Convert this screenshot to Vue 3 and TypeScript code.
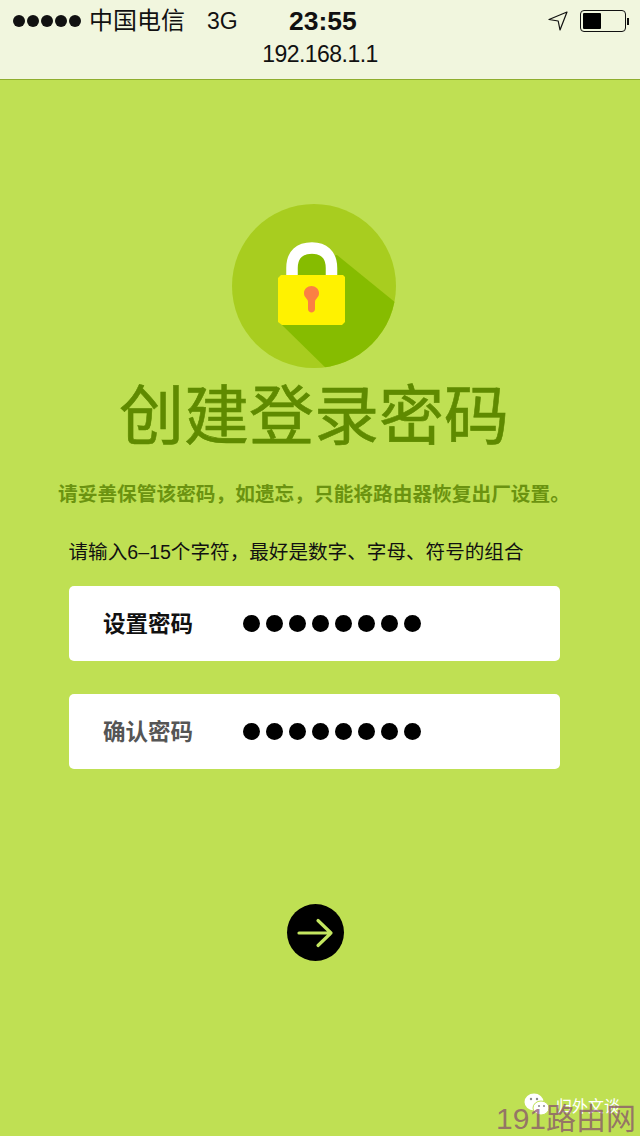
<template>
  <div class="page">
    <header class="topbar">
      <div class="status">
        <div class="status-left">
          <span class="signal"><i v-for="n in 5" :key="n" /></span>
          <span class="carrier">中国电信</span>
          <span class="net">3G</span>
        </div>
        <span class="time">23:55</span>
        <div class="status-right">
          <svg class="nav-arrow" width="20" height="22" viewBox="0 0 20 22">
            <path d="M1 9.5 19 2 12 20 10.2 11Z" fill="none" stroke="#111" stroke-width="1.2" stroke-linejoin="round" />
          </svg>
          <span class="battery"><span class="battery-fill" /></span>
          <span class="battery-tip" />
        </div>
      </div>
      <div class="url">192.168.1.1</div>
    </header>

    <main class="content">
      <svg class="lock" width="164" height="164" viewBox="0 0 164 164">
        <defs>
          <clipPath id="disc"><circle cx="82" cy="82" r="82" /></clipPath>
        </defs>
        <circle cx="82" cy="82" r="82" fill="#a8cd1f" />
        <path d="M105 51 L170 104 L170 170 L100 170 L50 121 L60 60Z" fill="#86bc00" clip-path="url(#disc)" />
        <path d="M65 72V62C65 54 71 50 80 50C88 50 94 54 94 62V72Z" fill="#86bc00" />
        <path d="M60 72V64C60 50 68 44 80 44C91 44 99.5 50 99.5 64V72" fill="none" stroke="#fff" stroke-width="11.5" />
        <path d="M49 71H111L113 73V118L110 121H50L46 118V74Z" fill="#fff200" />
        <path d="M76 105V98C76 96 75 95.5 74 94C72.5 92.5 72 91 72 89C72 85 75.5 82 79.5 82C83.5 82 87 85 87 89C87 91 86.5 92.5 85 94C84 95.5 83 96 83 98V105C83 109.5 76 109.5 76 105Z" fill="#fb8043" />
      </svg>

      <h1 class="title">创建登录密码</h1>
      <p class="notice">请妥善保管该密码，如遗忘，只能将路由器恢复出厂设置。</p>
      <p class="hint">请输入6–15个字符，最好是数字、字母、符号的组合</p>

      <div class="fields">
        <div v-for="field in fields" :key="field.label" class="field">
          <span class="field-label" :class="{ muted: field.muted }">{{ field.label }}</span>
          <span class="dots"><i v-for="n in 8" :key="n" /></span>
        </div>
      </div>

      <button type="button" class="next" aria-label="Next">
        <svg width="40" height="40" viewBox="0 0 40 40">
          <path d="M4 20H36M23 7.5 36 20 23 32.5" fill="none" stroke="#c4e660" stroke-width="3.2" stroke-linecap="round" stroke-linejoin="round" />
        </svg>
      </button>
    </main>

    <div class="wm-account">
      <svg class="wm-icon" width="26" height="24" viewBox="0 0 26 24">
        <ellipse cx="10" cy="9" rx="9.5" ry="8.5" fill="#fff" />
        <ellipse cx="17" cy="15" rx="8" ry="7" fill="#fff" stroke="#bfe053" stroke-width="1" />
        <circle cx="7" cy="6" r="1.2" fill="#888" />
        <circle cx="13" cy="6" r="1.2" fill="#888" />
        <circle cx="15" cy="13" r="1" fill="#888" />
        <circle cx="20" cy="13" r="1" fill="#888" />
      </svg>
      <span>归外文谈</span>
    </div>
    <div class="wm-site">191路由网</div>
  </div>
</template>

<script setup lang="ts">
const fields = [
  { label: '设置密码', muted: false },
  { label: '确认密码', muted: true },
];
</script>

<style>
html,
body {
  margin: 0;
  background: #bfe053;
}
</style>

<style scoped>
.page {
  position: relative;
  width: 640px;
  height: 1136px;
  overflow: hidden;
  background: #bfe053;
  font-family: "Liberation Sans", "Noto Sans CJK SC", sans-serif;
}

.topbar {
  box-sizing: border-box;
  height: 80px;
  padding: 6px 0 0;
  background: #f1f6de;
  border-bottom: 1px solid #8fae2e;
  color: #111;
}

.status {
  position: relative;
  display: flex;
  justify-content: space-between;
  align-items: center;
  height: 30px;
  padding: 0 11px 0 13px;
}

.status-left {
  display: flex;
  align-items: center;
}

.signal {
  display: flex;
  gap: 2px;
  margin-right: 8px;
}

.signal i {
  width: 12px;
  height: 12px;
  border-radius: 50%;
  background: #111;
}

.carrier {
  width: 118px;
  margin-bottom: 5px;
  font-size: 24px;
}

.net {
  font-size: 23px;
}

.time {
  position: absolute;
  left: 289px;
  font-size: 26.5px;
  font-weight: 700;
}

.status-right {
  display: flex;
  align-items: center;
}

.nav-arrow {
  margin-right: 12px;
}

.battery {
  box-sizing: border-box;
  display: block;
  width: 46px;
  height: 22px;
  padding: 2px;
  border: 1px solid #111;
  border-radius: 4px;
}

.battery-fill {
  display: block;
  width: 18px;
  height: 100%;
  border-radius: 1px;
  background: #000;
}

.battery-tip {
  width: 2px;
  height: 7px;
  margin-left: 1px;
  background: #111;
}

.url {
  margin-top: 3px;
  text-align: center;
  font-size: 23px;
  line-height: 30px;
  letter-spacing: -0.55px;
}

.content {
  display: flex;
  flex-direction: column;
  align-items: center;
  padding-top: 124px;
}

.lock {
  display: block;
  margin-right: 12px;
}

.title {
  margin: 10px 12px 0 0;
  font-size: 65px;
  line-height: 78px;
  font-weight: 400;
  color: #5f8a00;
  -webkit-text-stroke: 0.6px #5f8a00;
}

.notice {
  margin: 25px 12px 0 0;
  font-size: 19.7px;
  line-height: 26px;
  font-weight: 700;
  color: #6b9310;
}

.hint {
  align-self: flex-start;
  margin: 32px 0 0 68.5px;
  font-size: 19.6px;
  line-height: 26px;
  color: #111;
}

.fields {
  display: flex;
  flex-direction: column;
  gap: 33px;
  align-self: flex-start;
  margin: 21px 0 0 68.5px;
}

.field {
  display: flex;
  align-items: center;
  width: 491.5px;
  height: 75px;
  border-radius: 5px;
  background: #fff;
}

.field-label {
  width: 140px;
  margin: 0 0 4px 34.5px;
  font-size: 22.5px;
  font-weight: 700;
  color: #111;
}

.field-label.muted {
  color: #555;
}

.dots {
  display: flex;
  gap: 6px;
}

.dots i {
  width: 17px;
  height: 17px;
  border-radius: 50%;
  background: #000;
}

.next {
  display: flex;
  align-items: center;
  justify-content: center;
  width: 57px;
  height: 57px;
  margin: 135px 10px 0 0;
  padding: 0;
  border: none;
  border-radius: 50%;
  background: #000;
}

.wm-account {
  position: absolute;
  left: 524px;
  top: 1093px;
  display: flex;
  align-items: center;
  gap: 6px;
  font-size: 16px;
  color: #fff;
}

.wm-site {
  position: absolute;
  left: 496px;
  top: 1101px;
  font-size: 30px;
  line-height: 36px;
  color: rgba(130, 70, 110, 0.7);
}
</style>
